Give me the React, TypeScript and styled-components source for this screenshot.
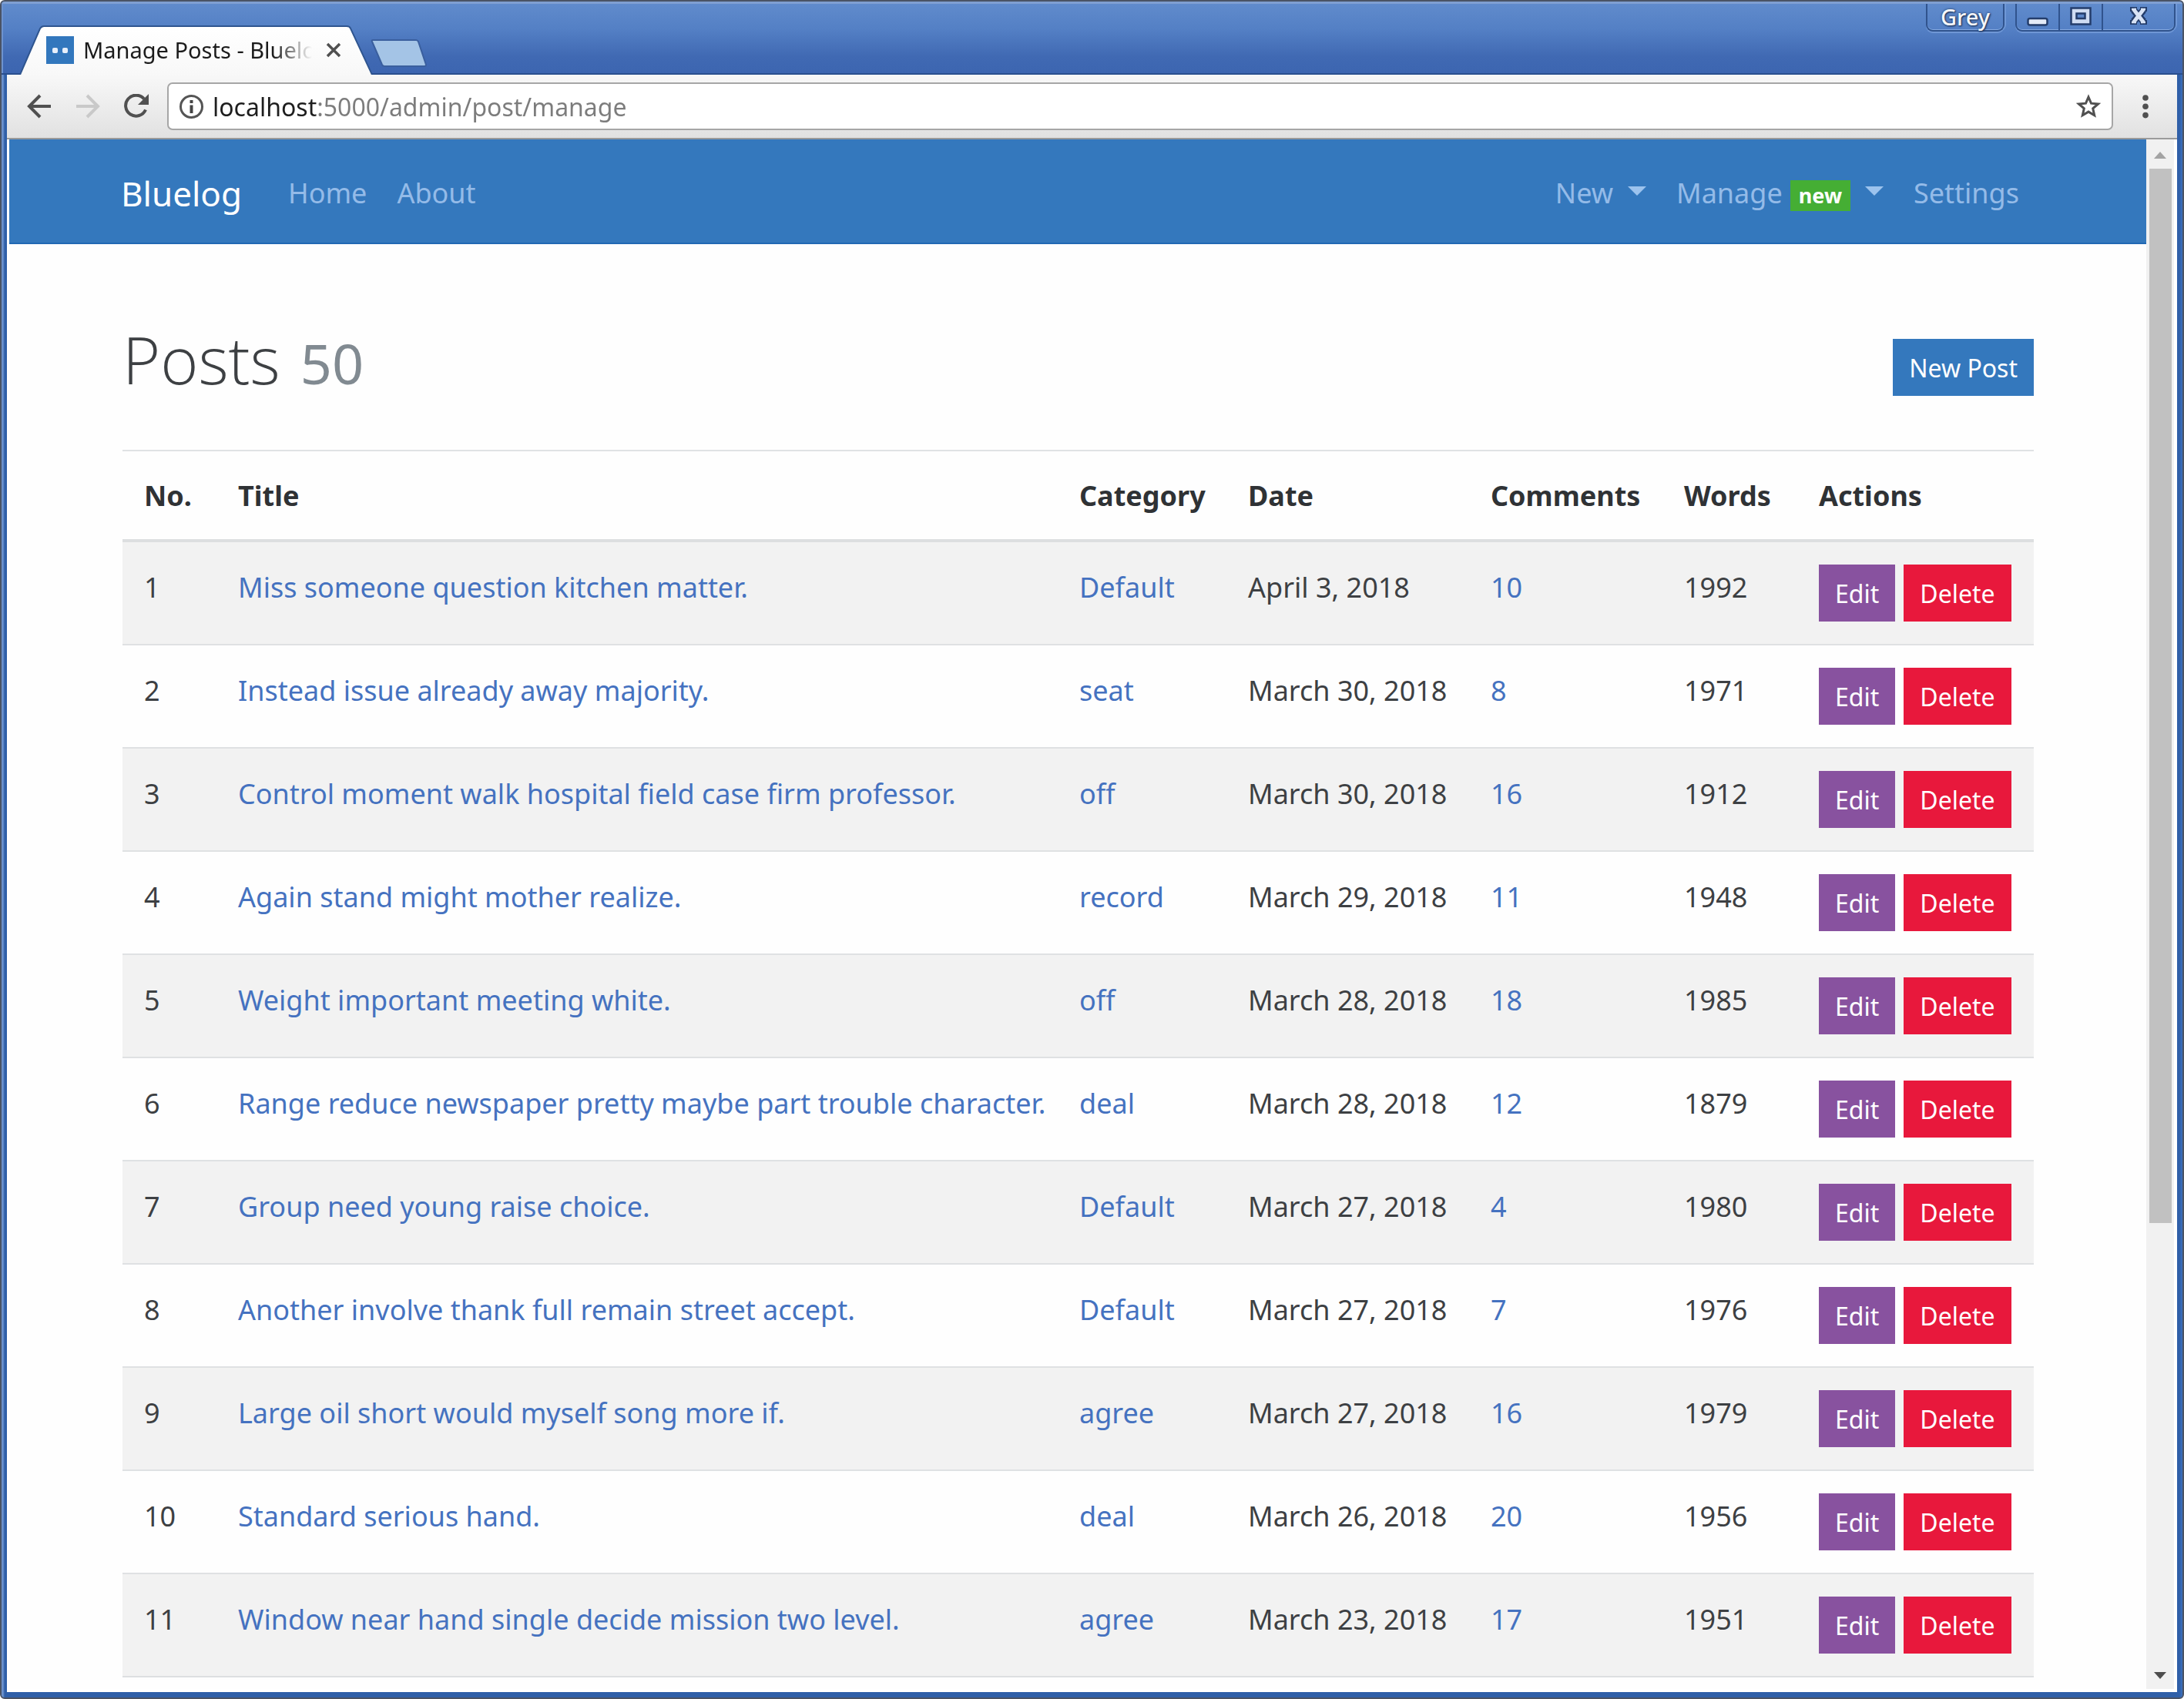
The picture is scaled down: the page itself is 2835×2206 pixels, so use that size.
import React from 'react';
import styled, { createGlobalStyle } from 'styled-components';

const font = '"Noto Sans", "Open Sans", sans-serif';

const GlobalStyle = createGlobalStyle`
  *, *::before, *::after { box-sizing: border-box; }
  body {
    margin: 0;
    font-family: ${font};
    font-size: 36px;
    line-height: 54px;
    color: #3d4043;
    background: #fff;
  }
  button, input { font-family: inherit; }
  svg { display: block; }
`;

/* ---------- window frame ---------- */

const Frame = styled.div`
  display: flex;
  flex-direction: column;
  height: 100vh;
  border: 2px solid #4a5364;
  border-radius: 6px;
  overflow: hidden;
  background: #3566ae;
`;

const TitleBar = styled.header`
  display: flex;
  justify-content: space-between;
  flex: none;
  height: 95px;
  padding: 0 9px 0 24px;
  border-top: 3px solid #7f9fd2;
  background: linear-gradient(#608bcc, #5480c5 35%, #4069b3 75%, #3c65b0);
  box-shadow: inset 0 -2px 0 #2a4f8e, inset 2px 0 0 #6d92cf;
`;

const TabStrip = styled.div`
  display: flex;
  align-items: flex-end;
`;

const Tab = styled.div`
  position: relative;
  display: flex;
  align-items: center;
  width: 457px;
  height: 64px;
  padding: 0 34px;
`;

const TabShape = styled.svg`
  position: absolute;
  inset: 0;
  width: 100%;
  height: 100%;
`;

const Favicon = styled.span`
  position: relative;
  display: flex;
  align-items: center;
  justify-content: center;
  gap: 6px;
  flex: none;
  width: 36px;
  height: 36px;
  margin-right: 12px;
  background: #3277bd;

  &::before, &::after {
    content: '';
    width: 7px;
    height: 7px;
    border-radius: 2px;
    background: #e6effa;
  }
`;

const TabTitle = styled.span`
  position: relative;
  flex: 1;
  overflow: hidden;
  white-space: nowrap;
  margin-right: 12px;
  font-size: 29px;
  line-height: 44px;
  color: #1b1b1b;
  mask-image: linear-gradient(90deg, #000 calc(100% - 50px), transparent);
`;

const IconButton = styled.button`
  position: relative;
  flex: none;
  display: flex;
  align-items: center;
  justify-content: center;
  width: 32px;
  height: 32px;
  padding: 0;
  border: 0;
  background: none;
  color: ${(p) => (p.disabled ? '#c9c9c9' : '#505050')};
`;

const NewTabButton = styled.button`
  align-self: flex-end;
  margin: 0 0 8px -2px;
  padding: 0;
  border: 0;
  background: none;
`;

const Controls = styled.div`
  display: flex;
  align-items: flex-start;
  gap: 14px;
`;

const ControlGroup = styled.div`
  display: flex;
  height: 36px;
  border: 2px solid #30538d;
  border-top: 0;
  border-radius: 0 0 9px 9px;
  box-shadow: inset 0 -1px 0 #84a9e0, 0 2px 0 #6f97d6, 2px 0 0 #6f97d6;
`;

const ControlButton = styled.button<{ $width: number }>`
  display: flex;
  align-items: center;
  justify-content: center;
  width: ${(p) => p.$width}px;
  padding: 0;
  border: 0;
  background: none;
  font-size: 29px;
  font-weight: 500;
  line-height: 36px;
  color: #f4f6fa;
  text-shadow: 0 0 3px #1d3358, 1px 1px 2px #1d3358;

  & + & { border-left: 2px solid #30538d; }
`;

/* ---------- browser toolbar ---------- */

const Body = styled.div`
  display: flex;
  flex-direction: column;
  flex: 1;
  min-height: 0;
  padding: 0 7px 7px;
  background: linear-gradient(90deg, #6b91cc 2px, #2f5fa8 4px, #2f5fa8 calc(100% - 4px), #3d70bd 100%);
`;

const Toolbar = styled.div`
  display: flex;
  align-items: center;
  flex: none;
  height: 84px;
  padding: 0 25px 0 26px;
  border-bottom: 2px solid #9a9a9a;
  background: linear-gradient(#f8f8f8, #e1e1e1);
`;

const HistoryButtons = styled.div`
  display: flex;
  gap: 31px;
`;

const AddressBar = styled.form`
  display: flex;
  align-items: center;
  flex: 1;
  height: 62px;
  margin: 0 26px 0 24px;
  padding: 0 14px;
  border: 2px solid #a6a6a6;
  border-radius: 7px;
  background: #fff;
`;

const AddressInput = styled.input`
  flex: 1;
  min-width: 0;
  height: 48px;
  margin-left: 12px;
  padding: 0;
  border: 0;
  outline: 0;
  font-size: 32px;
  color: transparent;
  background: linear-gradient(90deg, #1e1e1e 137px, #7c7c7c 137px);
  background-clip: text;
  -webkit-background-clip: text;
`;

/* ---------- page viewport and scrollbar ---------- */

const Viewport = styled.div`
  display: flex;
  flex: 1;
  min-height: 0;
  padding: 0 4px 4px 3px;
  background: #fff;
`;

const Page = styled.div`
  flex: 1;
  min-width: 0;
  overflow: hidden;
  background: #fefefe;
`;

const Scrollbar = styled.div`
  display: flex;
  flex-direction: column;
  flex: none;
  width: 36px;
  background: #f1f1f1;
`;

const ScrollArrow = styled.button<{ $dim?: boolean }>`
  display: flex;
  align-items: center;
  justify-content: center;
  flex: none;
  height: 38px;
  padding: 2px 0 0;
  border: 0;
  background: none;
  color: ${(p) => (p.$dim ? '#a3a3a3' : '#4d4d4d')};
`;

const ScrollTrack = styled.div`
  flex: 1;
  padding: 0 3px 0 4px;
`;

const ScrollThumb = styled.div`
  height: calc(71% - 6px);
  background: #c1c1c1;
`;

/* ---------- site navigation ---------- */

const Navbar = styled.nav`
  display: flex;
  align-items: center;
  height: 136px;
  padding: 6px 165px 0 145px;
  border-bottom: 2px solid #2168b3;
  background: #3478bd;
`;

const Brand = styled.a`
  margin-right: 60px;
  font-size: 44px;
  color: #fff;
  text-decoration: none;
`;

const NavList = styled.div`
  display: flex;
  gap: 39px;

  & + & { margin-left: auto; }
`;

const NavLink = styled.a`
  display: flex;
  align-items: baseline;
  color: #94bbe8;
  text-decoration: none;
`;

const Caret = styled.span`
  align-self: center;
  margin: 0 0 6px 19px;
  border: solid transparent;
  border-width: 12px 12px 0;
  border-top-color: #9cc3ee;
`;

const Badge = styled.span`
  margin-left: 10px;
  padding: 0 11px;
  font-size: 27px;
  font-weight: 700;
  line-height: 40px;
  color: #fff;
  background: #45ae34;
`;

/* ---------- content ---------- */

const Container = styled.main`
  padding: 103px 146px 0 147px;
`;

const PageHeader = styled.div`
  display: flex;
  align-items: flex-end;
  justify-content: space-between;
  margin-bottom: 70px;
`;

const Heading = styled.h1`
  display: flex;
  align-items: baseline;
  gap: 26px;
  margin: 0;
  font-family: "Open Sans", ${font};
  font-size: 84px;
  font-weight: 300;
  line-height: 94px;
`;

const Count = styled.small`
  font-family: ${font};
  font-size: 72px;
  font-weight: 400;
  line-height: 72px;
  color: #818a91;
`;

const tones = { primary: '#3478bd', edit: '#88529f', danger: '#e8183c' };

const Button = styled.button<{ $tone: keyof typeof tones }>`
  height: 74px;
  padding: 2px 21px 0;
  border: 0;
  font-size: 32px;
  line-height: 72px;
  color: #fff;
  background: ${(p) => tones[p.$tone]};
`;

const Actions = styled.div`
  display: flex;
  gap: 11px;
`;

const Table = styled.table`
  width: 100%;
  table-layout: fixed;
  border-spacing: 0;
  border-bottom: 2px solid #dddfe1;
`;

const Column = styled.col<{ $width?: number }>`
  width: ${(p) => (p.$width ? `${p.$width}px` : 'auto')};
`;

const HeadCell = styled.th`
  padding: 31px 0 29px 28px;
  border-top: 2px solid #e0e2e4;
  border-bottom: 4px solid #dddfe0;
  font-weight: 700;
  text-align: left;
  color: #2f3235;
`;

const Cell = styled.td`
  padding: 29px 0 29px 28px;
  border-top: 2px solid #dfe1e3;
  line-height: 60px;
  vertical-align: top;
  white-space: nowrap;
`;

const Row = styled.tr`
  &:nth-child(odd) { background: #f2f2f2; }
  &:first-child ${Cell} { border-top: 0; }
`;

const TextLink = styled.a`
  color: #4572c0;
  text-decoration: none;
`;

/* ---------- data ---------- */

type Post = [title: string, category: string, date: string, comments: number, words: number];

const posts: Post[] = [
  ['Miss someone question kitchen matter.', 'Default', 'April 3, 2018', 10, 1992],
  ['Instead issue already away majority.', 'seat', 'March 30, 2018', 8, 1971],
  ['Control moment walk hospital field case firm professor.', 'off', 'March 30, 2018', 16, 1912],
  ['Again stand might mother realize.', 'record', 'March 29, 2018', 11, 1948],
  ['Weight important meeting white.', 'off', 'March 28, 2018', 18, 1985],
  ['Range reduce newspaper pretty maybe part trouble character.', 'deal', 'March 28, 2018', 12, 1879],
  ['Group need young raise choice.', 'Default', 'March 27, 2018', 4, 1980],
  ['Another involve thank full remain street accept.', 'Default', 'March 27, 2018', 7, 1976],
  ['Large oil short would myself song more if.', 'agree', 'March 27, 2018', 16, 1979],
  ['Standard serious hand.', 'deal', 'March 26, 2018', 20, 1956],
  ['Window near hand single decide mission two level.', 'agree', 'March 23, 2018', 17, 1951],
];

const columns: { label: string; width?: number }[] = [
  { label: 'No.', width: 122 },
  { label: 'Title' },
  { label: 'Category', width: 219 },
  { label: 'Date', width: 315 },
  { label: 'Comments', width: 251 },
  { label: 'Words', width: 175 },
  { label: 'Actions', width: 307 },
];

/* ---------- icons ---------- */

const BackIcon = () => (
  <svg width="32" height="32" viewBox="0 0 32 32" fill="none" stroke="currentColor" strokeWidth="4">
    <path d="M31 16H4M17 2L3 16l14 14" />
  </svg>
);

const ForwardIcon = () => (
  <svg width="32" height="32" viewBox="0 0 32 32" fill="none" stroke="currentColor" strokeWidth="4">
    <path d="M1 16h27M15 2l14 14-14 14" />
  </svg>
);

const ReloadIcon = () => (
  <svg width="32" height="32" viewBox="0 0 32 32">
    <path d="M28 20.500A13.500 13.500 0 1 1 26 6.500" fill="none" stroke="currentColor" strokeWidth="4" />
    <path d="M32 0v14H18z" fill="currentColor" />
  </svg>
);

const InfoIcon = () => (
  <svg width="31" height="31" viewBox="0 0 31 31">
    <circle cx="15.500" cy="15.500" r="14" fill="none" stroke="#555" strokeWidth="3" />
    <path d="M13.500 7h4v4h-4zM13.500 13.500h4V24h-4z" fill="#444" />
  </svg>
);

const StarIcon = () => (
  <svg width="32" height="32" viewBox="0 0 32 32" fill="none" stroke="currentColor" strokeWidth="3">
    <path d="M16 4l3.500 8.200 9 .8-6.800 5.900 2 8.800L16 23.100l-7.700 4.600 2-8.800L3.500 13l9-.8z" />
  </svg>
);

const MenuIcon = () => (
  <svg width="8" height="32" viewBox="0 0 8 32" fill="currentColor">
    <circle cx="4" cy="5" r="3.800" />
    <circle cx="4" cy="16.300" r="3.800" />
    <circle cx="4" cy="27.600" r="3.800" />
  </svg>
);

const CloseIcon = () => (
  <svg width="20" height="20" viewBox="0 0 20 20" stroke="currentColor" strokeWidth="3.500">
    <path d="M2 2l16 16M18 2L2 18" />
  </svg>
);

const MinimizeGlyph = () => (
  <svg width="28" height="28" viewBox="0 0 28 28">
    <rect x="1.500" y="16" width="25" height="8.500" rx="2.500" fill="#e4ebf7" stroke="#243d6b" strokeWidth="2.500" />
  </svg>
);

const MaximizeGlyph = () => (
  <svg width="28" height="28" viewBox="0 0 28 28" stroke="#243d6b" strokeWidth="2.500">
    <path d="M1.500 2.500h25v21h-25z" fill="#cfdcf2" />
    <path d="M8.500 9.500h11v6.500h-11z" fill="#5c87c9" />
  </svg>
);

const CloseGlyph = () => (
  <svg width="28" height="28" viewBox="0 0 28 28" fill="none">
    <path d="M7.500 5l13 15M20.500 5l-13 15" stroke="#243d6b" strokeWidth="9" />
    <path d="M3 4h9M16 4h9M3 21h9M16 21h9" stroke="#243d6b" strokeWidth="6" />
    <path d="M7.500 4l13 17M20.500 4l-13 17" stroke="#d8e3f5" strokeWidth="5" />
    <path d="M5 4h6M17 4h6M5 21h6M17 21h6" stroke="#d8e3f5" strokeWidth="2.500" />
  </svg>
);

const NewTabShape = () => (
  <svg width="74" height="39" viewBox="0 0 74 39">
    <path d="M3 2h56q2 0 3 2l10 30q0 2-2 2H18q-2 0-3-2L2 4q-1-2 1-2z" fill="#a4c4e6" stroke="#3a5f9e" strokeWidth="2" />
  </svg>
);

const ArrowUp = () => (
  <svg width="16" height="9" viewBox="0 0 16 9"><path d="M8 0l8 9H0z" fill="currentColor" /></svg>
);

const ArrowDown = () => (
  <svg width="16" height="9" viewBox="0 0 16 9"><path d="M0 0h16L8 9z" fill="currentColor" /></svg>
);

/* ---------- parts ---------- */

function BrowserTitleBar() {
  return (
    <TitleBar>
      <TabStrip>
        <Tab>
          <TabShape viewBox="0 0 457 64" preserveAspectRatio="none" aria-hidden="true">
            <defs>
              <linearGradient id="tabFill" x1="0" y1="0" x2="0" y2="1">
                <stop offset="0" stopColor="#fff" />
                <stop offset="1" stopColor="#f8f8f8" />
              </linearGradient>
            </defs>
            <path d="M0 64L26 4q2-3 5-3h393q4 0 5 3l28 60z" fill="url(#tabFill)" />
            <path d="M0 64L26 4q2-3 5-3h393q4 0 5 3l28 60" fill="none" stroke="#2f558f" strokeWidth="2" />
          </TabShape>
          <Favicon />
          <TabTitle>Manage Posts - Bluelog</TabTitle>
          <IconButton type="button" aria-label="Close tab"><CloseIcon /></IconButton>
        </Tab>
        <NewTabButton type="button" aria-label="New tab"><NewTabShape /></NewTabButton>
      </TabStrip>
      <Controls>
        <ControlGroup>
          <ControlButton type="button" $width={98}>Grey</ControlButton>
        </ControlGroup>
        <ControlGroup>
          <ControlButton type="button" $width={54} aria-label="Minimize"><MinimizeGlyph /></ControlButton>
          <ControlButton type="button" $width={56} aria-label="Maximize"><MaximizeGlyph /></ControlButton>
          <ControlButton type="button" $width={94} aria-label="Close"><CloseGlyph /></ControlButton>
        </ControlGroup>
      </Controls>
    </TitleBar>
  );
}

function BrowserToolbar() {
  return (
    <Toolbar>
      <HistoryButtons>
        <IconButton type="button" aria-label="Back"><BackIcon /></IconButton>
        <IconButton type="button" aria-label="Forward" disabled><ForwardIcon /></IconButton>
        <IconButton type="button" aria-label="Reload"><ReloadIcon /></IconButton>
      </HistoryButtons>
      <AddressBar>
        <InfoIcon />
        <AddressInput type="text" aria-label="Address" defaultValue="localhost:5000/admin/post/manage" />
        <IconButton type="button" aria-label="Bookmark"><StarIcon /></IconButton>
      </AddressBar>
      <IconButton type="button" aria-label="Menu"><MenuIcon /></IconButton>
    </Toolbar>
  );
}

function SiteNav() {
  return (
    <Navbar>
      <Brand href="#">Bluelog</Brand>
      <NavList>
        <NavLink href="#">Home</NavLink>
        <NavLink href="#">About</NavLink>
      </NavList>
      <NavList>
        <NavLink href="#">New<Caret /></NavLink>
        <NavLink href="#">Manage<Badge>new</Badge><Caret /></NavLink>
        <NavLink href="#">Settings</NavLink>
      </NavList>
    </Navbar>
  );
}

function PostTable() {
  return (
    <Table>
      <colgroup>
        {columns.map((c) => <Column key={c.label} $width={c.width} />)}
      </colgroup>
      <thead>
        <tr>{columns.map((c) => <HeadCell key={c.label} scope="col">{c.label}</HeadCell>)}</tr>
      </thead>
      <tbody>
        {posts.map(([title, category, date, comments, words], i) => (
          <Row key={title}>
            <Cell>{i + 1}</Cell>
            <Cell><TextLink href="#">{title}</TextLink></Cell>
            <Cell><TextLink href="#">{category}</TextLink></Cell>
            <Cell>{date}</Cell>
            <Cell><TextLink href="#">{comments}</TextLink></Cell>
            <Cell>{words}</Cell>
            <Cell>
              <Actions>
                <Button type="button" $tone="edit">Edit</Button>
                <Button type="button" $tone="danger">Delete</Button>
              </Actions>
            </Cell>
          </Row>
        ))}
      </tbody>
    </Table>
  );
}

export default function App() {
  return (
    <Frame>
      <GlobalStyle />
      <BrowserTitleBar />
      <Body>
        <BrowserToolbar />
        <Viewport>
          <Page>
            <SiteNav />
            <Container>
              <PageHeader>
                <Heading>Posts <Count>50</Count></Heading>
                <Button type="button" $tone="primary">New Post</Button>
              </PageHeader>
              <PostTable />
            </Container>
          </Page>
          <Scrollbar>
            <ScrollArrow type="button" $dim aria-label="Scroll up"><ArrowUp /></ScrollArrow>
            <ScrollTrack><ScrollThumb /></ScrollTrack>
            <ScrollArrow type="button" aria-label="Scroll down"><ArrowDown /></ScrollArrow>
          </Scrollbar>
        </Viewport>
      </Body>
    </Frame>
  );
}
